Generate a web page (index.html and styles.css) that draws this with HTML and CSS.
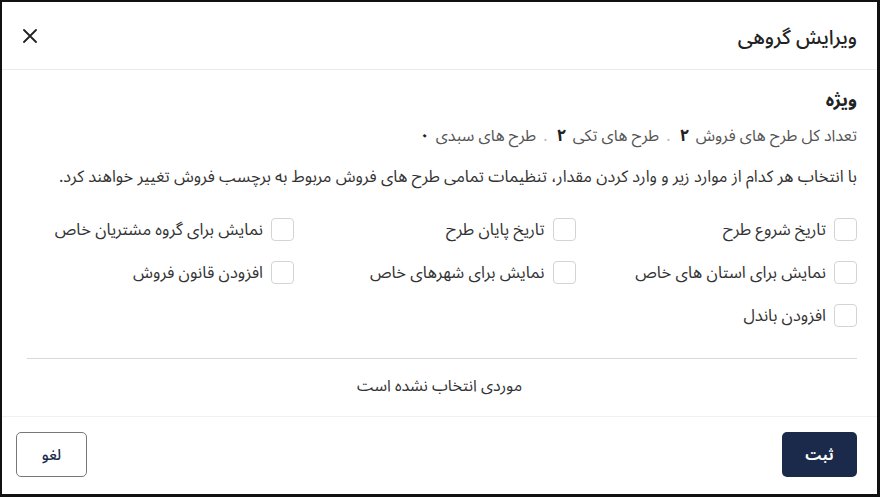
FILE: index.html
```html
<!DOCTYPE html>
<html lang="fa" dir="rtl">
<head>
<meta charset="utf-8">
<title>ویرایش گروهی</title>
<link rel="stylesheet" href="styles.css">
</head>
<body>
<div class="dialog">
  <header class="dlg-head">
    <h1 class="dlg-title">ویرایش گروهی</h1>
    <button class="close-btn" aria-label="بستن">
      <svg width="14" height="14" viewBox="0 0 14 14"><path d="M1 1 L13 13 M13 1 L1 13" stroke="#222" stroke-width="1.8" fill="none" stroke-linecap="round"/></svg>
    </button>
  </header>
  <main class="dlg-body">
    <h2 class="section-title">ویژه</h2>
    <p class="stats">
      <span>تعداد کل طرح های فروش</span> <b>۲</b>
      <span class="sep">.</span>
      <span>طرح های تکی</span> <b>۲</b>
      <span class="sep">.</span>
      <span>طرح های سبدی</span> <b>۰</b>
    </p>
    <p class="desc">با انتخاب هر کدام از موارد زیر و وارد کردن مقدار، تنظیمات تمامی طرح های فروش مربوط به برچسب فروش تغییر خواهند کرد.</p>
    <div class="options">
      <label class="opt"><span class="box"></span><span>تاریخ شروع طرح</span></label>
      <label class="opt"><span class="box"></span><span>تاریخ پایان طرح</span></label>
      <label class="opt"><span class="box"></span><span>نمایش برای گروه مشتریان خاص</span></label>
      <label class="opt"><span class="box"></span><span>نمایش برای استان های خاص</span></label>
      <label class="opt"><span class="box"></span><span>نمایش برای شهرهای خاص</span></label>
      <label class="opt"><span class="box"></span><span>افزودن قانون فروش</span></label>
      <label class="opt"><span class="box"></span><span>افزودن باندل</span></label>
    </div>
    <div class="divider"></div>
    <p class="empty">موردی انتخاب نشده است</p>
  </main>
  <footer class="dlg-foot">
    <button class="btn btn-primary">ثبت</button>
    <button class="btn btn-outline">لغو</button>
  </footer>
</div>
</body>
</html>
```
FILE: styles.css
```css
* { box-sizing: border-box; }
html, body { margin: 0; padding: 0; background: #fff; }
body {
  font-family: "Noto Sans Arabic", "DejaVu Sans", sans-serif;
  color: #222;
}
.dialog {
  width: 880px;
  height: 497px;
  border-style: solid;
  border-color: #111;
  border-width: 2px 3px 3px 2px;
  display: flex;
  flex-direction: column;
  direction: rtl;
}
.dlg-head {
  height: 68px;
  flex: none;
  display: flex;
  align-items: center;
  justify-content: space-between;
  padding: 0 20px 0 18px;
  border-bottom: 1px solid #ececec;
}
.dlg-title {
  margin: 0;
  font-size: 20px;
  font-weight: 500;
  color: #222;
  line-height: 1;
  padding-top: 4px;
}
.close-btn {
  border: 0;
  background: none;
  padding: 3px;
  display: flex;
  cursor: pointer;
}
.dlg-body {
  flex: 1;
  padding: 18px 20px 0 20px;
  display: flex;
  flex-direction: column;
}
.section-title {
  margin: 0;
  font-size: 18px;
  font-weight: 700;
  line-height: 24px;
  color: #222;
}
.stats {
  margin: 12px 0 0 0;
  font-size: 16px;
  line-height: 24px;
  color: #555;
}
.stats b { color: #222; font-weight: 700; margin: 0 2px; font-size: 17px; }
.stats .sep { color: #bbb; margin: 0 3px; }
.desc {
  margin: 17px 0 0 0;
  font-size: 16.4px;
  line-height: 24px;
  color: #333;
}
.options {
  margin-top: 29px;
  display: grid;
  grid-template-columns: repeat(3, 267px);
  column-gap: 14.5px;
  row-gap: 20px;
}
.opt {
  display: flex;
  align-items: center;
  gap: 8px;
  height: 23px;
  font-size: 16.5px;
  color: #333;
}
.box {
  width: 23px;
  height: 23px;
  border: 1.5px solid #d4d4d4;
  border-radius: 4px;
  flex: none;
}
.divider {
  margin: 31px 0 0 0;
  height: 1px;
  background: #d9d9d9;
  width: 830px;
}
.empty {
  margin: 15px 0 0 0;
  text-align: center;
  font-size: 16px;
  line-height: 24px;
  color: #333;
}
.dlg-foot {
  flex: none;
  height: 78px;
  border-top: 1px solid #f0f0f0;
  display: flex;
  justify-content: space-between;
  align-items: flex-start;
  padding: 15px 20px 0 14px;
}
.btn {
  height: 45px;
  border-radius: 5px;
  font-family: inherit;
  font-size: 15px;
  font-weight: 700;
  cursor: pointer;
}
.btn-primary {
  width: 75px;
  background: #1b2a4b;
  color: #fff;
  border: 0;
}
.btn-outline {
  width: 71px;
  background: #fff;
  color: #1b2a4b;
  border: 1.5px solid #777;
  font-weight: 500;
}
```
